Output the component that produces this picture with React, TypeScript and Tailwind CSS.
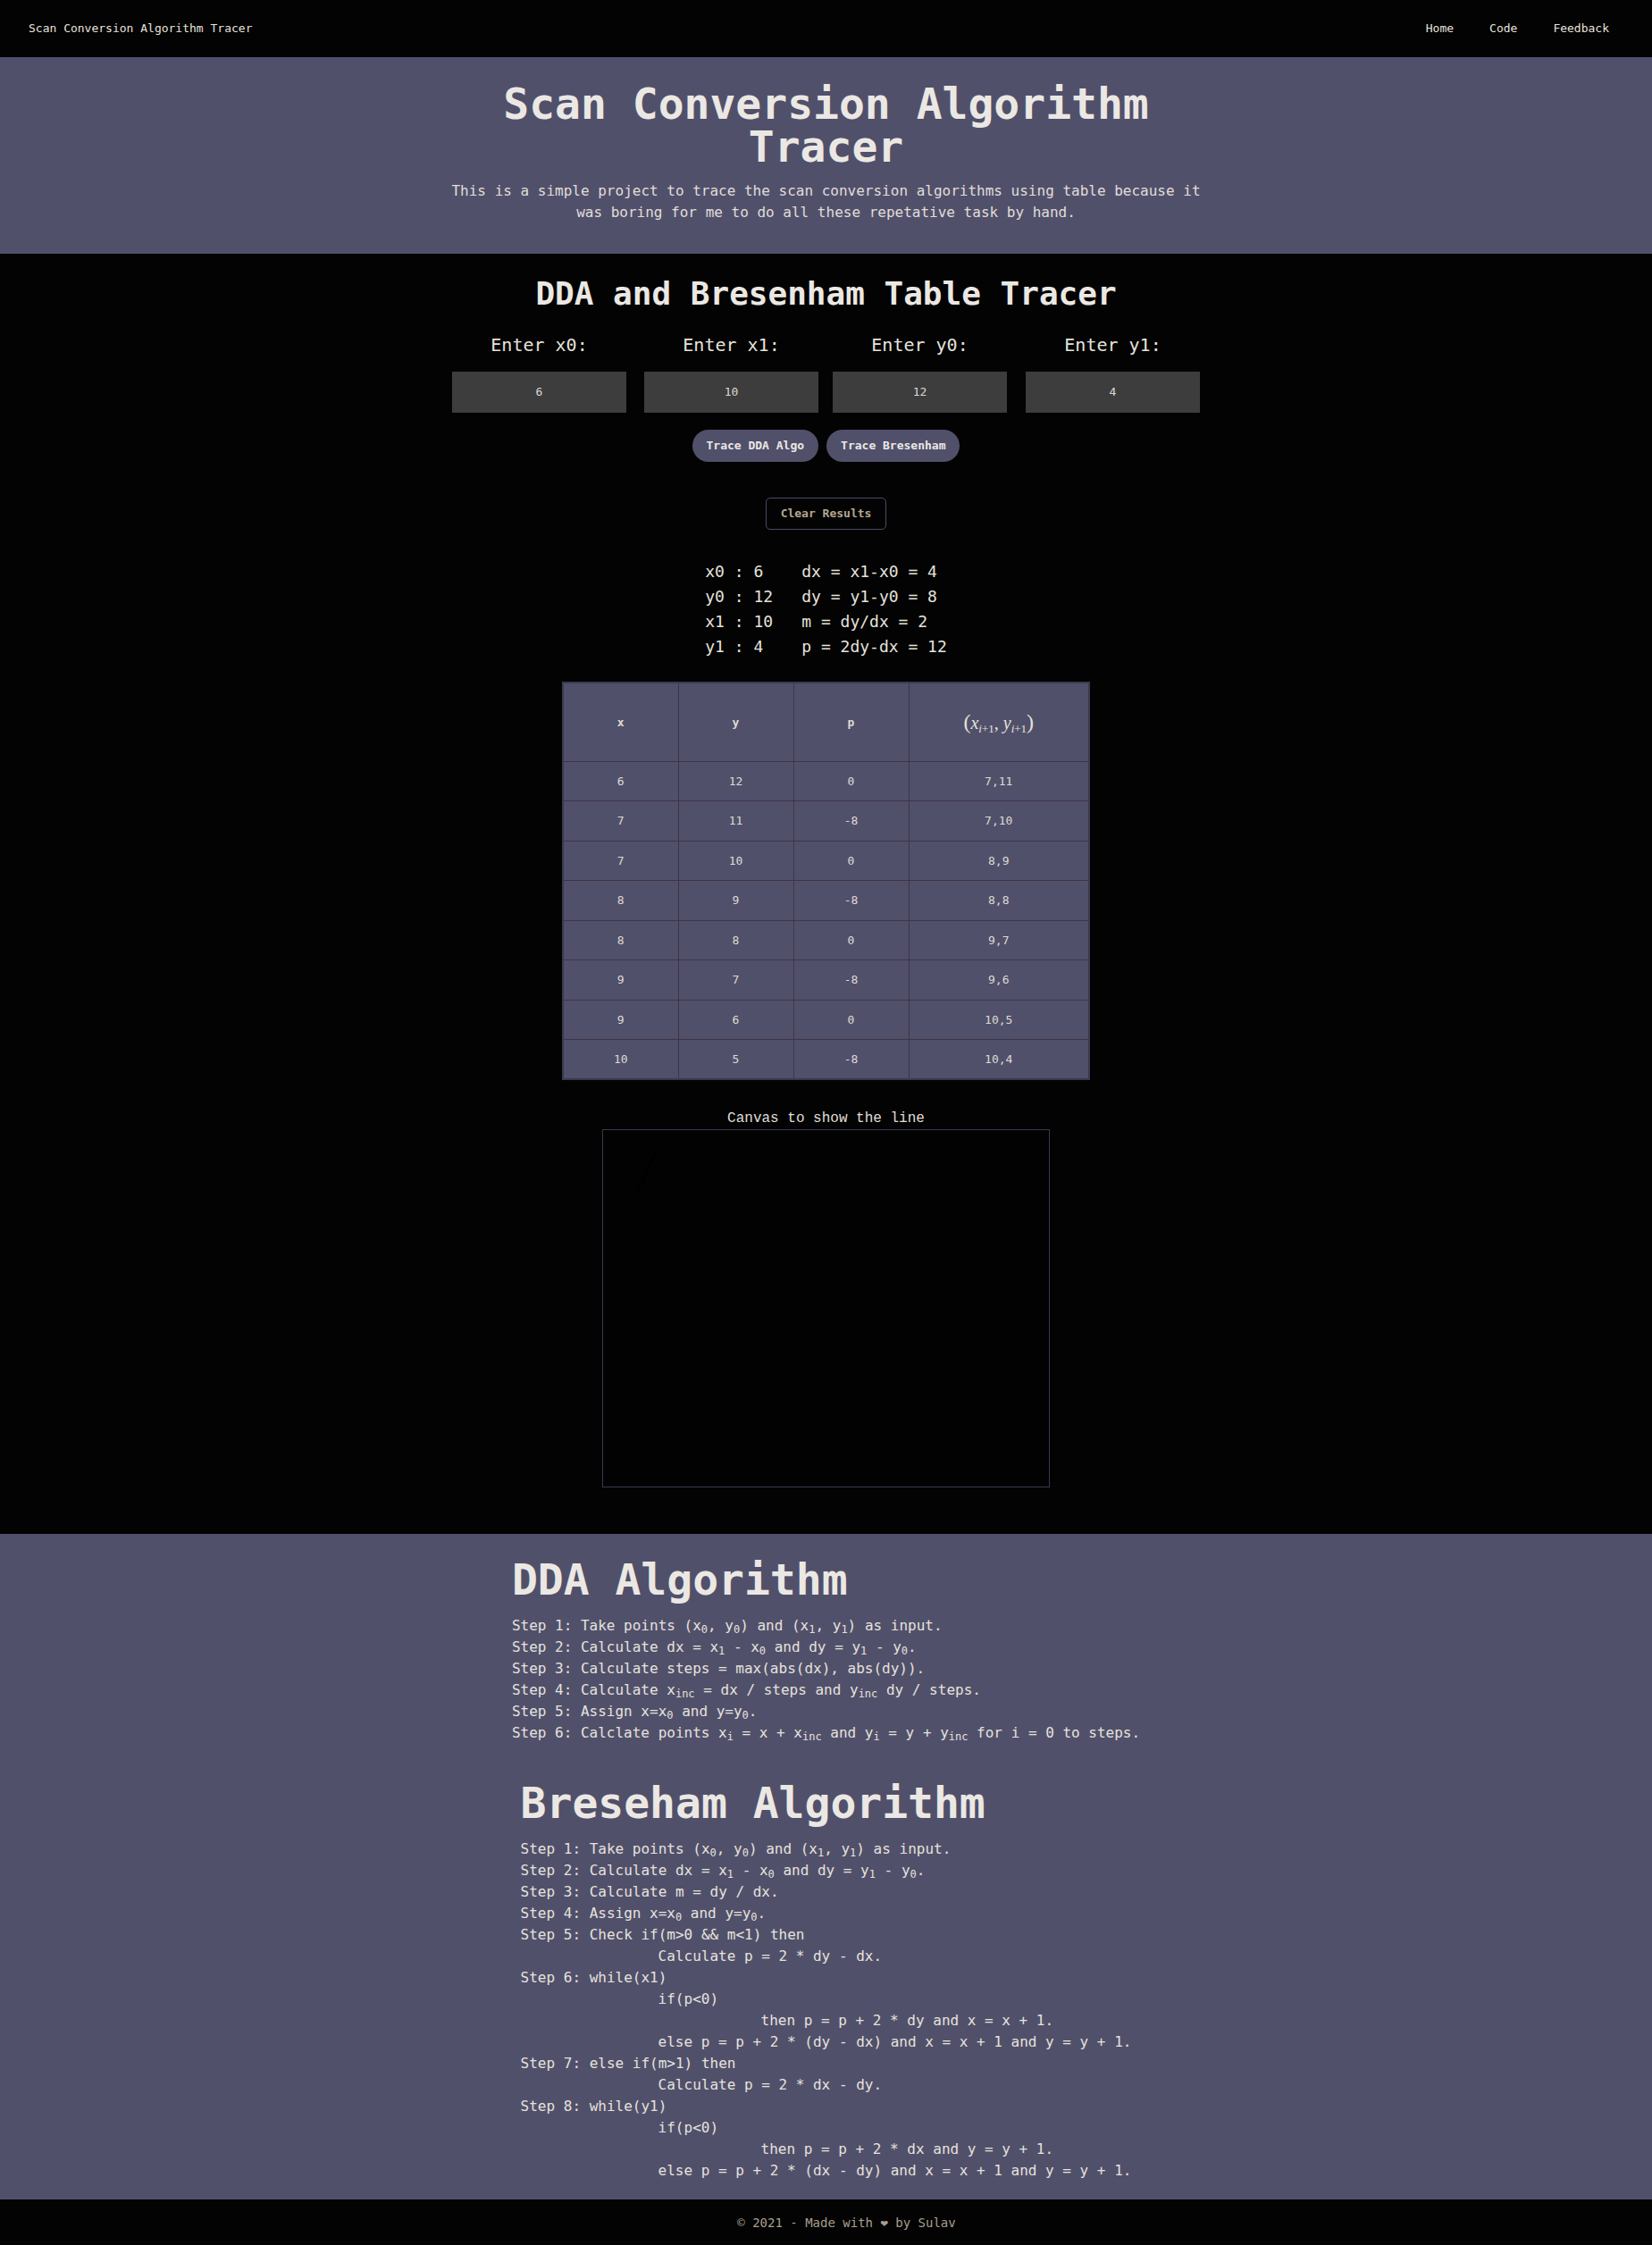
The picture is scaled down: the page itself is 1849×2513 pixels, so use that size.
import React from "react";

const rows: [number, number, number, string][] = [
  [6, 12, 0, "7,11"],
  [7, 11, -8, "7,10"],
  [7, 10, 0, "8,9"],
  [8, 9, -8, "8,8"],
  [8, 8, 0, "9,7"],
  [9, 7, -8, "9,6"],
  [9, 6, 0, "10,5"],
  [10, 5, -8, "10,4"],
];

const inputs = [
  { label: "Enter x0:", value: "6", gap: "" },
  { label: "Enter x1:", value: "10", gap: "ml-5" },
  { label: "Enter y0:", value: "12", gap: "ml-4" },
  { label: "Enter y1:", value: "4", gap: "ml-[21px]" },
];

function MathHeader() {
  return (
    <span className="font-['Liberation_Serif',serif] text-[20px] font-normal text-[#e6e2dc]">
      <span className="text-[24px]">(</span>
      <i>x</i>
      <sub className="text-[13px]">
        <i>i</i>+1
      </sub>
      , <i>y</i>
      <sub className="text-[13px]">
        <i>i</i>+1
      </sub>
      <span className="text-[24px]">)</span>
    </span>
  );
}

function Tracer() {
  return (
    <section className="flex flex-col items-center bg-[#030303] pb-[52px]">
      <h2 className="mt-[25px] text-[36px] font-bold leading-10 text-[#ebe8e3]">DDA and Bresenham Table Tracer</h2>

      <div className="mt-[23px] flex">
        {inputs.map((item) => (
          <div key={item.label} className={`flex w-[195px] flex-col items-center ${item.gap}`}>
            <label className="text-xl leading-7 text-[#e6e2dc]">{item.label}</label>
            <div className="mt-4 flex h-[46px] w-full items-center justify-center bg-[#3d3d3d] text-[13px] text-[#dcd8d2]">
              {item.value}
            </div>
          </div>
        ))}
      </div>

      <div className="mt-[19px] flex gap-[9px]">
        <button className="h-9 rounded-full bg-[#51506b] px-4 text-[13px] font-bold text-[#ebe8e3]">Trace DDA Algo</button>
        <button className="h-9 rounded-full bg-[#51506b] px-4 text-[13px] font-bold text-[#ebe8e3]">Trace Bresenham</button>
      </div>

      <button className="mt-10 h-9 rounded-[5px] border border-[#4b4a66] px-4 text-[13px] font-bold text-[#b3a78f]">Clear Results</button>

      <div className="mt-[33px] grid grid-cols-[108px_auto] text-[18px] leading-7 text-[#e6e2dc]">
        <span>x0 : 6</span>
        <span>dx = x1-x0 = 4</span>
        <span>y0 : 12</span>
        <span>dy = y1-y0 = 8</span>
        <span>x1 : 10</span>
        <span>m = dy/dx = 2</span>
        <span>y1 : 4</span>
        <span>p = 2dy-dx = 12</span>
      </div>

      <table className="mt-[25px] w-[591px] table-fixed border-collapse border-2 border-[#3b3a4d] bg-[#51506b] text-[13px] text-[#dedad4]">
        <colgroup>
          <col className="w-[129px]" />
          <col className="w-[129px]" />
          <col className="w-[129px]" />
          <col />
        </colgroup>
        <thead>
          <tr>
            <th className="h-[88px] border border-[#3f3444] font-bold">x</th>
            <th className="h-[88px] border border-[#3f3444] font-bold">y</th>
            <th className="h-[88px] border border-[#3f3444] font-bold">p</th>
            <th className="h-[88px] border border-[#3f3444]">
              <MathHeader />
            </th>
          </tr>
        </thead>
        <tbody>
          {rows.map((r, i) => (
            <tr key={i}>
              <td className="h-[44.5px] border border-[#3f3444] text-center">{r[0]}</td>
              <td className="h-[44.5px] border border-[#3f3444] text-center">{r[1]}</td>
              <td className="h-[44.5px] border border-[#3f3444] text-center">{r[2]}</td>
              <td className="h-[44.5px] border border-[#3f3444] text-center">{r[3]}</td>
            </tr>
          ))}
        </tbody>
      </table>

      <p className="mt-[31px] font-['Liberation_Mono',monospace] text-base leading-6 text-[#e0ddd8]">Canvas to show the line</p>
      <div className="h-[401px] w-[501px] border border-[#3a3950] bg-[#020202]">
        <svg width="499" height="399" viewBox="0 0 499 399">
          <line x1="59" y1="25" x2="37" y2="72" stroke="#000" strokeWidth="2" />
        </svg>
      </div>
    </section>
  );
}

function Steps() {
  return (
    <section className="bg-[#51506b] pb-5 pt-[23px] text-[#e6e2dc]">
      <div className="mx-auto w-fit">
        <h2 className="text-5xl font-bold leading-[1.2] text-[#ebe8e3]">DDA Algorithm</h2>
        <div className="mt-[10px] text-base leading-6">
          <p>Step 1: Take points (x<sub>0</sub>, y<sub>0</sub>) and (x<sub>1</sub>, y<sub>1</sub>) as input.</p>
          <p>Step 2: Calculate dx = x<sub>1</sub> - x<sub>0</sub> and dy = y<sub>1</sub> - y<sub>0</sub>.</p>
          <p>Step 3: Calculate steps = max(abs(dx), abs(dy)).</p>
          <p>Step 4: Calculate x<sub>inc</sub> = dx / steps and y<sub>inc</sub> dy / steps.</p>
          <p>Step 5: Assign x=x<sub>0</sub> and y=y<sub>0</sub>.</p>
          <p>Step 6: Calclate points x<sub>i</sub> = x + x<sub>inc</sub> and y<sub>i</sub> = y + y<sub>inc</sub> for i = 0 to steps.</p>
        </div>
      </div>

      <div className="mx-auto mt-[38px] w-fit">
        <h2 className="text-5xl font-bold leading-[1.2] text-[#ebe8e3]">Breseham Algorithm</h2>
        <div className="mt-[11px] text-base leading-6">
          <p>Step 1: Take points (x<sub>0</sub>, y<sub>0</sub>) and (x<sub>1</sub>, y<sub>1</sub>) as input.</p>
          <p>Step 2: Calculate dx = x<sub>1</sub> - x<sub>0</sub> and dy = y<sub>1</sub> - y<sub>0</sub>.</p>
          <p>Step 3: Calculate m = dy / dx.</p>
          <p>Step 4: Assign x=x<sub>0</sub> and y=y<sub>0</sub>.</p>
          <p>Step 5: Check if(m&gt;0 &amp;&amp; m&lt;1) then</p>
          <p className="pl-[154px]">Calculate p = 2 * dy - dx.</p>
          <p>Step 6: while(x1)</p>
          <p className="pl-[154px]">if(p&lt;0)</p>
          <p className="pl-[269px]">then p = p + 2 * dy and x = x + 1.</p>
          <p className="pl-[154px]">else p = p + 2 * (dy - dx) and x = x + 1 and y = y + 1.</p>
          <p>Step 7: else if(m&gt;1) then</p>
          <p className="pl-[154px]">Calculate p = 2 * dx - dy.</p>
          <p>Step 8: while(y1)</p>
          <p className="pl-[154px]">if(p&lt;0)</p>
          <p className="pl-[269px]">then p = p + 2 * dx and y = y + 1.</p>
          <p className="pl-[154px]">else p = p + 2 * (dx - dy) and x = x + 1 and y = y + 1.</p>
        </div>
      </div>
    </section>
  );
}

export default function App() {
  return (
    <div className="min-h-screen bg-[#030303] font-['DejaVu_Sans_Mono',monospace] text-[#e6e2dc]">
      <nav className="flex h-16 items-center justify-between pl-8 pr-12 text-[13px] text-[#e6e2dc]">
        <span>Scan Conversion Algorithm Tracer</span>
        <div className="flex gap-10">
          <a href="#">Home</a>
          <a href="#">Code</a>
          <a href="#">Feedback</a>
        </div>
      </nav>

      <header className="bg-[#51506b] pb-[34px] pt-7">
        <div className="mx-auto w-[840px] text-center">
          <h1 className="text-5xl font-bold leading-none text-[#ebe8e3]">Scan Conversion Algorithm Tracer</h1>
          <p className="mt-3.5 text-base leading-6 text-[#e0ddd8]">
            This is a simple project to trace the scan conversion algorithms using table because it was boring for me to do all these repetative task by hand.
          </p>
        </div>
      </header>

      <Tracer />
      <Steps />

      <footer className="flex h-[52px] items-center justify-center pl-[46px] text-sm text-[#a89f8c]">
        © 2021 - Made with ❤ by Sulav
      </footer>
    </div>
  );
}
